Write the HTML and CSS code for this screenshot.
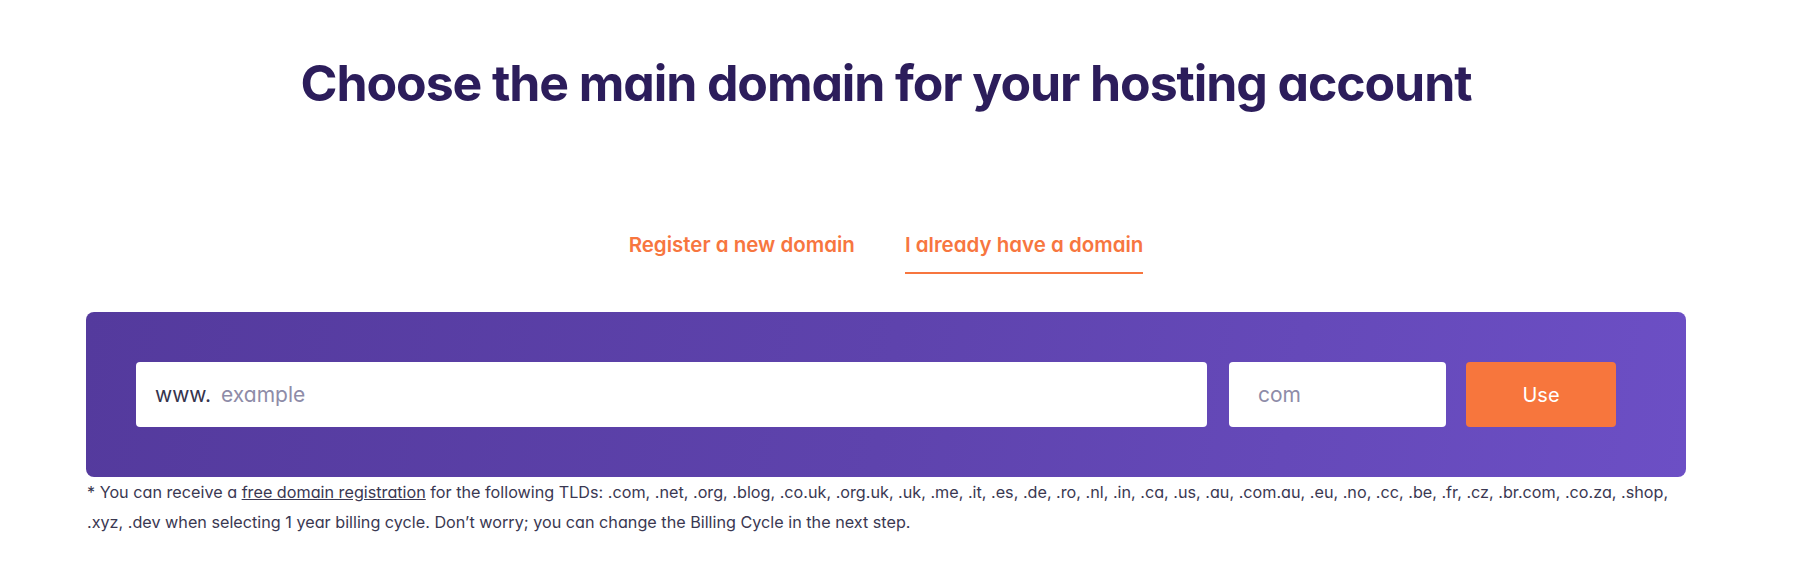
FILE: index.html
```html
<!DOCTYPE html>
<html lang="en">
<head>
<meta charset="utf-8">
<title>Choose the main domain</title>
<link rel="stylesheet" href="styles.css">
</head>
<body>
<main class="page">
  <h1 class="title">Choose the main domain for your hosting account</h1>
  <nav class="tabs">
    <a class="tab" href="#">Register a new domain</a>
    <a class="tab tab-active" href="#">I already have a domain</a>
  </nav>
  <section class="domain-box">
    <div class="field field-domain">
      <span class="prefix">www.</span><span class="placeholder">example</span>
    </div>
    <div class="field field-tld">
      <span class="placeholder">com</span>
    </div>
    <button class="use-btn" type="button">Use</button>
  </section>
  <p class="note">* You can receive a <a href="#" class="note-link">free domain registration</a> for the following TLDs: .com, .net, .org, .blog, .co.uk, .org.uk, .uk, .me, .it, .es, .de, .ro, .nl, .in, .ca, .us, .au, .com.au, .eu, .no, .cc, .be, .fr, .cz, .br.com, .co.za, .shop, .xyz, .dev when selecting 1 year billing cycle. Don’t worry; you can change the Billing Cycle in the next step.</p>
</main>
</body>
</html>
```

FILE: styles.css
```css
* { box-sizing: border-box; }
html, body { margin: 0; padding: 0; background: #ffffff; }
body {
  font-family: Inter, "Noto Sans", sans-serif;
  font-feature-settings: "cv11";
  color: #36344d;
}
.page {
  width: 1772px;
  display: flex;
  flex-direction: column;
  align-items: center;
}
.title {
  margin: 52px 0 0;
  font-size: 50px;
  line-height: 62px;
  font-weight: 700;
  letter-spacing: -1.1px;
  color: #2c1d5b;
}
.tabs {
  margin-top: 119px;
  display: flex;
  gap: 50px;
}
.tab {
  display: block;
  font-size: 20.5px;
  font-weight: 600;
  line-height: 24px;
  color: #f7763f;
  text-decoration: none;
  padding-bottom: 15px;
  border-bottom: 2px solid transparent;
}
.tab-active { border-bottom-color: #f7763f; }
.domain-box {
  margin-top: 38px;
  width: 1600px;
  height: 165px;
  border-radius: 8px;
  background: linear-gradient(100deg, #543a9d 0%, #5e43ad 50%, #6c4fc5 100%);
  padding: 50px 70px 50px 50px;
  display: flex;
  gap: 20px;
}
.field {
  height: 65px;
  background: #fff;
  border-radius: 4px;
  display: flex;
  align-items: center;
  font-size: 21px;
}
.field-domain { flex: 1; padding-left: 19px; margin-right: 2px; }
.field-tld { width: 217px; padding-left: 29px; }
.prefix { color: #36344d; margin-right: 10px; }
.placeholder { color: #8e8ca8; }
.use-btn {
  width: 150px;
  height: 65px;
  border: 0;
  border-radius: 4px;
  background: #f7763d;
  color: #fff;
  font-family: inherit;
  font-feature-settings: "cv11";
  font-size: 20px;
  font-weight: 400;
  cursor: pointer;
}
.note {
  width: 1600px;
  margin: 0;
  padding-left: 1px;
  font-size: 16.2px;
  line-height: 30px;
  color: #3a3852;
}
.note-link { color: #3a3852; text-decoration: underline; }
```
